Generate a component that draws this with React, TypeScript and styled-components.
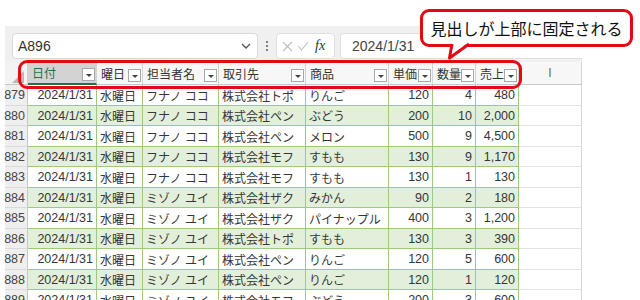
import styled, { createGlobalStyle } from "styled-components";

const GlobalStyle = createGlobalStyle`
  html, body {
    margin: 0;
    padding: 0;
    background: #fff;
  }
  body {
    font-family: "Liberation Sans", "Noto Sans CJK JP", sans-serif;
  }
`;

const COLS = "23px 69px 46px 76px 87px 83px 44px 43px 43px 63px";
const RED = "#e50914";
const GREEN_LINE = "#9dca7f";

interface IRow {
  no: number;
  staff: string;
  client: string;
  item: string;
  price: string;
  qty: string;
  sales: string;
}

const rows: IRow[] = [
  { no: 879, staff: "フナノ ココ", client: "株式会社トポ", item: "りんご", price: "120", qty: "4", sales: "480" },
  { no: 880, staff: "フナノ ココ", client: "株式会社ペン", item: "ぶどう", price: "200", qty: "10", sales: "2,000" },
  { no: 881, staff: "フナノ ココ", client: "株式会社ペン", item: "メロン", price: "500", qty: "9", sales: "4,500" },
  { no: 882, staff: "フナノ ココ", client: "株式会社モフ", item: "すもも", price: "130", qty: "9", sales: "1,170" },
  { no: 883, staff: "フナノ ココ", client: "株式会社モフ", item: "すもも", price: "130", qty: "1", sales: "130" },
  { no: 884, staff: "ミゾノ ユイ", client: "株式会社ザク", item: "みかん", price: "90", qty: "2", sales: "180" },
  { no: 885, staff: "ミゾノ ユイ", client: "株式会社ザク", item: "パイナップル", price: "400", qty: "3", sales: "1,200" },
  { no: 886, staff: "ミゾノ ユイ", client: "株式会社トポ", item: "すもも", price: "130", qty: "3", sales: "390" },
  { no: 887, staff: "ミゾノ ユイ", client: "株式会社ペン", item: "りんご", price: "120", qty: "5", sales: "600" },
  { no: 888, staff: "ミゾノ ユイ", client: "株式会社ペン", item: "りんご", price: "120", qty: "1", sales: "120" },
  { no: 889, staff: "ミゾノ ユイ", client: "株式会社モフ", item: "ぶどう", price: "200", qty: "3", sales: "600" },
];

const headers = ["日付", "曜日", "担当者名", "取引先", "商品", "単価", "数量", "売上"];

const Page = styled.div`
  position: relative;
  width: 640px;
  height: 300px;
  overflow: hidden;
  background: #fff;
  padding: 26px 0 0 5px;
  box-sizing: border-box;
`;

const Sheet = styled.div`
  width: 577px;
  background: #f0f0f0;
`;

const FormulaBar = styled.div`
  display: flex;
  align-items: center;
  height: 36px;
  padding: 7px 0 3px 7px;
  box-sizing: border-box;
`;

const NameBox = styled.div`
  width: 246px;
  height: 26px;
  box-sizing: border-box;
  background: #fff;
  border: 1px solid #d9d9d9;
  border-radius: 4px;
  display: flex;
  align-items: center;
  justify-content: space-between;
  padding: 0 6px 0 5px;
  font-size: 14px;
  color: #333;
`;

const Dots = styled.div`
  width: 18px;
  display: flex;
  justify-content: center;
`;

const FxBox = styled.div`
  width: 59px;
  height: 26px;
  box-sizing: border-box;
  background: #fff;
  border: 1px solid #e0e0e0;
  border-radius: 4px;
  display: flex;
  align-items: center;
  gap: 4px;
  padding-left: 5px;
`;

const Fx = styled.span`
  font-family: "Liberation Serif", serif;
  font-style: italic;
  font-size: 14px;
  color: #333;
  margin-left: 2px;
`;

const FormulaInput = styled.div`
  flex: 1;
  height: 26px;
  margin-left: 5px;
  box-sizing: border-box;
  background: #fff;
  border: 1px solid #e0e0e0;
  border-right: none;
  border-radius: 4px 0 0 4px;
  display: flex;
  align-items: center;
  padding-left: 11px;
  font-size: 14px;
  color: #444;
`;

const Row = styled.div<{ $h: number }>`
  display: grid;
  grid-template-columns: ${COLS};
  height: ${(p) => p.$h}px;
`;

const Corner = styled.div`
  display: flex;
  justify-content: flex-end;
  align-items: flex-end;
  padding: 0 3px 1px 0;
  background: #f3f3f3;
  border-right: 1px solid #d0d0d0;
  border-bottom: 1px solid #c8c8c8;
  &::after {
    content: "";
    width: 0;
    height: 0;
    border-left: 12px solid transparent;
    border-bottom: 12px solid #b9b9b9;
  }
`;

const HeadCell = styled.div<{ $selected?: boolean; $center?: boolean }>`
  display: flex;
  align-items: center;
  justify-content: ${(p) => (p.$center ? "center" : "flex-start")};
  padding-left: ${(p) => (p.$center ? 0 : 4)}px;
  box-sizing: border-box;
  overflow: hidden;
  white-space: nowrap;
  font-size: 12px;
  background: ${(p) => (p.$selected ? "#d3d3d3" : "#f7f7f7")};
  color: ${(p) => (p.$selected ? "#217346" : p.$center ? "#666" : "#333")};
  border-right: 1px solid #d4d4d4;
  border-bottom: ${(p) => (p.$selected ? "2px solid #217346" : "1px solid #c8c8c8")};
`;

const FilterBtn = styled.span`
  margin-left: auto;
  margin-right: 1px;
  align-self: flex-end;
  margin-bottom: 2px;
  width: 13px;
  height: 13px;
  box-sizing: border-box;
  border: 1px solid #a8a8a8;
  background: #fff;
  display: flex;
  align-items: flex-end;
  justify-content: center;
  padding-bottom: 3px;
  &::after {
    content: "";
    width: 0;
    height: 0;
    border-left: 3px solid transparent;
    border-right: 3px solid transparent;
    border-top: 3px solid #444;
  }
`;

const RowNum = styled.div`
  display: flex;
  align-items: center;
  justify-content: flex-end;
  padding: 1px 2px 0 0;
  background: #efefef;
  color: #444;
  font-size: 12.5px;
  border-right: 1px solid #c8c8c8;
  border-bottom: 1px solid #dadada;
`;

const Cell = styled.div<{ $band: boolean; $right?: boolean }>`
  display: flex;
  align-items: center;
  justify-content: ${(p) => (p.$right ? "flex-end" : "flex-start")};
  padding: 1px 3px 0 3px;
  box-sizing: border-box;
  overflow: hidden;
  white-space: nowrap;
  font-size: ${(p) => (p.$right ? 12.5 : 12)}px;
  color: #363636;
  background: ${(p) => (p.$band ? "#e2efda" : "#fff")};
  border-right: 1px solid ${GREEN_LINE};
  border-bottom: 1px solid ${GREEN_LINE};
`;

const EmptyCell = styled.div`
  background: #fff;
  border-right: 1px solid #d6d6d6;
  border-bottom: 1px solid #e3e3e3;
`;

const Highlight = styled.div`
  position: absolute;
  left: 18px;
  top: 60px;
  width: 504px;
  height: 29px;
  box-sizing: border-box;
  border: 3px solid ${RED};
  border-radius: 9px;
`;

const Callout = styled.div`
  position: absolute;
  left: 420px;
  top: 9px;
  width: 213px;
  height: 38px;
  box-sizing: border-box;
  border: 3px solid ${RED};
  border-radius: 9px;
  background: #fff;
  display: flex;
  align-items: center;
  justify-content: center;
  font-family: "Noto Sans CJK JP", sans-serif;
  font-size: 16px;
  color: #111;
`;

const Tail = styled.svg`
  position: absolute;
  left: 440px;
  top: 40px;
`;

function Chevron() {
  return (
    <svg width="10" height="6" viewBox="0 0 10 6">
      <polyline points="1,1 5,5 9,1" fill="none" stroke="#555" strokeWidth="1.3" />
    </svg>
  );
}

function App() {
  return (
    <>
      <GlobalStyle />
      <Page>
        <Sheet>
          <FormulaBar>
            <NameBox>
              <span>A896</span>
              <Chevron />
            </NameBox>
            <Dots>
              <svg width="4" height="12" viewBox="0 0 4 12">
                <circle cx="2" cy="2" r="1.1" fill="#666" />
                <circle cx="2" cy="6" r="1.1" fill="#666" />
                <circle cx="2" cy="10" r="1.1" fill="#666" />
              </svg>
            </Dots>
            <FxBox>
              <svg width="11" height="11" viewBox="0 0 11 11">
                <path d="M1 1 L10 10 M10 1 L1 10" stroke="#bdbdbd" strokeWidth="1.1" />
              </svg>
              <svg width="12" height="10" viewBox="0 0 12 10">
                <polyline points="1,5 4.5,9 11,1" fill="none" stroke="#bdbdbd" strokeWidth="1.1" />
              </svg>
              <Fx>fx</Fx>
            </FxBox>
            <FormulaInput>2024/1/31</FormulaInput>
          </FormulaBar>

          <Row $h={23}>
            <Corner />
            {headers.map((h, i) => (
              <HeadCell key={h} $selected={i === 0}>
                {h}
                <FilterBtn />
              </HeadCell>
            ))}
            <HeadCell $center>I</HeadCell>
          </Row>

          {rows.map((r, i) => {
            const band = i % 2 === 1;
            return (
              <Row key={r.no} $h={20.5}>
                <RowNum>{r.no}</RowNum>
                <Cell $band={band} $right>2024/1/31</Cell>
                <Cell $band={band}>水曜日</Cell>
                <Cell $band={band}>{r.staff}</Cell>
                <Cell $band={band}>{r.client}</Cell>
                <Cell $band={band}>{r.item}</Cell>
                <Cell $band={band} $right>{r.price}</Cell>
                <Cell $band={band} $right>{r.qty}</Cell>
                <Cell $band={band} $right>{r.sales}</Cell>
                <EmptyCell />
              </Row>
            );
          })}
        </Sheet>

        <Highlight />
        <Callout>見出しが上部に固定される</Callout>
        <Tail width="34" height="22" viewBox="0 0 34 22">
          <polygon points="12,2 9.5,18 29,2" fill="#fff" />
          <polyline points="12,4 9.5,18 29,4" fill="none" stroke={RED} strokeWidth="3" strokeLinejoin="round" />
        </Tail>
      </Page>
    </>
  );
}

export default App;
